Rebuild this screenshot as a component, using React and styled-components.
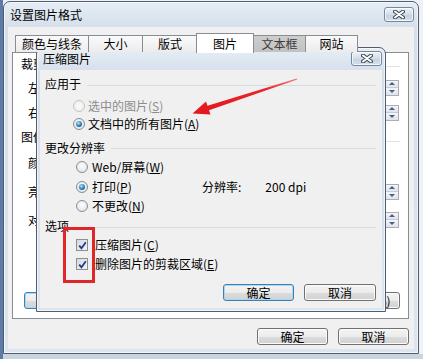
import styled, { createGlobalStyle } from 'styled-components';

const GlobalStyle = createGlobalStyle`
  html, body {
    margin: 0;
    padding: 0;
  }
  body {
    font-family: "Noto Sans CJK SC", "Noto Sans", sans-serif;
    font-size: 12px;
    color: #000;
  }
`;

const Desktop = styled.div`
  position: relative;
  width: 423px;
  height: 359px;
  overflow: hidden;
  background:
    linear-gradient(to right, #5e7aa6 0, #5e7aa6 3px, transparent 3px),
    linear-gradient(to bottom, #eef1f5 0, #eef1f5 354px, #c9d4e1 354px);
`;

const Window = styled.div`
  position: absolute;
  left: ${p => p.$x}px;
  top: ${p => p.$y}px;
  width: ${p => p.$w}px;
  height: ${p => p.$h}px;
  box-sizing: border-box;
  display: flex;
  flex-direction: column;
  border: 1px solid #4f5d6e;
  border-radius: 7px 7px 0 0;
  background: linear-gradient(to bottom, #e6edf5, #d5dfea 26px, #dce4ed);
  box-shadow: inset 0 0 0 1px rgba(255, 255, 255, 0.6);
`;

const TitleBar = styled.div`
  height: ${p => p.$h}px;
  flex: none;
  display: flex;
  align-items: flex-start;
  justify-content: space-between;
  padding: 0 ${p => p.$pr}px 0 6px;
`;

const TitleText = styled.span`
  line-height: 18px;
  align-self: center;
`;

const CloseButton = styled.div`
  width: ${p => p.$w}px;
  height: 15px;
  margin-top: ${p => p.$mt}px;
  box-sizing: border-box;
  border: 1px solid #7688a0;
  border-radius: 3px;
  background: linear-gradient(to bottom, #eef2f7, #d3dde9 50%, #c4d1e0 51%, #d6e0ec);
  box-shadow: inset 0 0 0 1px rgba(255, 255, 255, 0.7);
  display: flex;
  align-items: center;
  justify-content: center;
`;

const Client = styled.div`
  flex: 1;
  margin: 0 ${p => p.$m}px ${p => p.$m}px;
  background: #f0f0f0;
  display: flex;
  flex-direction: column;
  padding: ${p => p.$pad};
  min-height: 0;
`;

const Tabs = styled.div`
  display: flex;
  align-items: flex-end;
  height: 20px;
  margin: 0 0 -1px 3px;
  position: relative;
  z-index: 1;
`;

const Tab = styled.div`
  width: ${p => p.$w}px;
  height: ${p => (p.$active ? 20 : 17)}px;
  margin-bottom: ${p => (p.$active ? 0 : 1)}px;
  margin-left: ${p => (p.$active ? -1 : 0)}px;
  box-sizing: border-box;
  border: 1px solid #898c95;
  border-bottom: none;
  border-left: ${p => (p.$first || p.$active ? '1px solid #898c95' : 'none')};
  border-right: ${p => (p.$beforeActive ? 'none' : '1px solid #898c95')};
  background: ${p =>
    p.$active ? '#fff' : p.$disabled ? 'linear-gradient(#cdcdcd, #c2c2c2)' : 'linear-gradient(#fafafa, #ececec)'};
  color: ${p => (p.$disabled ? '#3c3c3c' : '#000')};
  display: flex;
  align-items: center;
  justify-content: center;
  line-height: 16px;
`;

const Panel = styled.div`
  height: 267px;
  flex: none;
  box-sizing: border-box;
  border: 1px solid #898c95;
  background: #fff;
  display: flex;
  flex-direction: column;
  padding: 0 8px 9px;
`;

const PanelHeading = styled.div`
  height: ${p => p.$h}px;
  display: flex;
  align-items: center;
  line-height: 18px;
`;

const Rule = styled.div`
  flex: 1;
  height: 1px;
  background: ${p => p.$c || '#dde3ea'};
  margin: ${p => p.$off || 3}px 0 0 6px;
`;

const FieldRow = styled.div`
  height: ${p => p.$h}px;
  display: flex;
  align-items: center;
  padding-left: 7px;
  line-height: 18px;
`;

const Field = styled.div`
  margin-left: auto;
  margin-right: 1px;
  width: 70px;
  height: 16px;
  box-sizing: border-box;
  border: 1px solid #abadb3;
  background: #fff;
  display: flex;
  justify-content: flex-end;
`;

const Spinner = styled.div`
  width: 12px;
  display: flex;
  flex-direction: column;
  border-left: 1px solid #c9ccd4;
`;

const SpinHalf = styled.div`
  flex: 1;
  display: flex;
  align-items: center;
  justify-content: center;
  background: linear-gradient(#f4f5f8, #dfe3ea);
  border-bottom: ${p => (p.$up ? '1px solid #c9ccd4' : 'none')};
  &::after {
    content: '';
    border-left: 3px solid transparent;
    border-right: 3px solid transparent;
    ${p => (p.$up ? 'border-bottom: 3px solid #4a5f86;' : 'border-top: 3px solid #4a5f86;')}
  }
`;

const Select = styled.div`
  margin-left: auto;
  margin-right: 40px;
  width: 90px;
  height: 18px;
  border: 1px solid #abadb3;
  box-sizing: border-box;
`;

const PanelButtons = styled.div`
  margin-top: auto;
  display: flex;
  justify-content: space-between;
  padding-left: 3px;
`;

const Btn = styled.button`
  width: ${p => p.$w}px;
  height: 17px;
  box-sizing: border-box;
  padding: 0;
  border: 1px solid ${p => (p.$default ? '#3c7fb1' : '#707070')};
  border-radius: 3px;
  background: linear-gradient(to bottom, #f4f4f4 0, #ececec 50%, #dcdcdc 51%, #d2d2d2 100%);
  box-shadow: inset 0 0 0 1px ${p => (p.$default ? '#a8d8f3' : '#fbfbfb')};
  font-family: inherit;
  font-size: 12px;
  line-height: 15px;
  color: #000;
  text-align: center;
`;

const ButtonRow = styled.div`
  display: flex;
  justify-content: flex-end;
  gap: 10px;
  margin-top: ${p => p.$mt}px;
`;

const Heading = styled.div`
  height: 18px;
  margin-top: ${p => p.$mt}px;
  display: flex;
  align-items: center;
  line-height: 18px;
`;

const Option = styled.div`
  height: 18px;
  margin-top: ${p => p.$mt}px;
  padding-left: ${p => p.$indent}px;
  display: flex;
  align-items: center;
  gap: ${p => p.$gap}px;
  line-height: 18px;
  color: ${p => (p.$disabled ? '#8d8d8d' : '#000')};
`;

const Label = styled.span`
  width: ${p => (p.$w ? `${p.$w}px` : 'auto')};
  flex: none;
`;

const Radio = styled.span`
  width: 12px;
  height: 12px;
  flex: none;
  box-sizing: border-box;
  border-radius: 50%;
  border: 1px solid ${p => (p.$disabled ? '#c4c4c4' : '#8a8d91')};
  background: ${p =>
    p.$disabled
      ? 'radial-gradient(circle at 50% 50%, #fafafa, #ececec)'
      : 'radial-gradient(circle at 50% 40%, #ffffff, #d9dce0)'};
  display: flex;
  align-items: center;
  justify-content: center;
  &::after {
    content: '';
    display: ${p => (p.$checked ? 'block' : 'none')};
    width: 6px;
    height: 6px;
    border-radius: 50%;
    background: radial-gradient(circle at 40% 35%, #b7e6ff, #2a7bb5 55%, #0f3f70);
  }
`;

const Check = styled.span`
  width: 12px;
  height: 12px;
  flex: none;
  box-sizing: border-box;
  border: 1px solid #8e8f8f;
  background: linear-gradient(135deg, #d3d8e0, #f2f4f7);
  display: flex;
  align-items: center;
  justify-content: center;
`;

const ResInfo = styled.span`
  display: flex;
  gap: 24px;
  color: #000;
`;

const RedBox = styled.div`
  position: absolute;
  left: 63px;
  top: 227px;
  width: 32px;
  height: 56px;
  box-sizing: border-box;
  border: 3px solid #e1262b;
  z-index: 5;
`;

const ArrowSvg = styled.svg`
  position: absolute;
  left: 190px;
  top: 75px;
  z-index: 5;
`;

const CloseGlyph = () => (
  <svg width="12" height="9" viewBox="0 0 12 9">
    <path d="M2 1.5 L10 7.5 M10 1.5 L2 7.5" stroke="#3e4856" strokeWidth="4" strokeLinecap="round" />
    <path d="M2 1.5 L10 7.5 M10 1.5 L2 7.5" stroke="#fff" strokeWidth="2" strokeLinecap="round" />
  </svg>
);

const Tick = () => (
  <svg width="9" height="9" viewBox="0 0 9 9">
    <path d="M1.2 4.6 L3.5 7.2 L7.8 1.3" fill="none" stroke="#28388a" strokeWidth="1.8" />
  </svg>
);

const Spin = () => (
  <Field>
    <Spinner>
      <SpinHalf $up />
      <SpinHalf />
    </Spinner>
  </Field>
);

const tabs = [
  { t: '颜色与线条', w: 74 },
  { t: '大小', w: 54 },
  { t: '版式', w: 54, beforeActive: true },
  { t: '图片', w: 58, active: true },
  { t: '文本框', w: 52, disabled: true },
  { t: '网站', w: 52 },
];

export default function App() {
  return (
    <Desktop>
      <GlobalStyle />

      <Window $x={3} $y={1} $w={416} $h={353}>
        <TitleBar $h={25} $pr={4}>
          <TitleText>设置图片格式</TitleText>
          <CloseButton $w={30} $mt={5}>
            <CloseGlyph />
          </CloseButton>
        </TitleBar>
        <Client $m={4} $pad="6px 5px 0 4px">
          <Tabs>
            {tabs.map((tab, i) => (
              <Tab
                key={tab.t}
                $w={tab.w}
                $first={i === 0}
                $active={tab.active}
                $disabled={tab.disabled}
                $beforeActive={tab.beforeActive}
              >
                {tab.t}
              </Tab>
            ))}
          </Tabs>
          <Panel>
            <PanelHeading $h={22}>
              裁剪
              <Rule $off={5} />
            </PanelHeading>
            <FieldRow $h={25}>
              左(<u>L</u>):
              <Spin />
            </FieldRow>
            <FieldRow $h={25}>
              右(<u>R</u>):
              <Spin />
            </FieldRow>
            <PanelHeading $h={24}>
              图像控制
              <Rule $off={8} />
            </PanelHeading>
            <FieldRow $h={28}>
              颜色(<u>C</u>):
              <Select />
            </FieldRow>
            <FieldRow $h={29}>
              亮度(<u>H</u>):
              <Spin />
            </FieldRow>
            <FieldRow $h={27}>
              对比度(<u>N</u>):
              <Spin />
            </FieldRow>
            <PanelButtons>
              <Btn $w={82} $default>
                压缩(<u>M</u>)...
              </Btn>
              <Btn $w={82}>重新设置(<u>S</u>)</Btn>
            </PanelButtons>
          </Panel>
          <ButtonRow $mt={9}>
            <Btn $w={71}>确定</Btn>
            <Btn $w={71}>取消</Btn>
          </ButtonRow>
        </Client>
      </Window>

      <Window $x={36} $y={47} $w={350} $h={265}>
        <TitleBar $h={22} $pr={3}>
          <TitleText>压缩图片</TitleText>
          <CloseButton $w={31} $mt={3}>
            <CloseGlyph />
          </CloseButton>
        </TitleBar>
        <Client $m={3} $pad="0 6px 0 5px">
          <Heading $mt={5}>
            应用于
            <Rule $c="#d3dce6" $off={2} />
          </Heading>
          <Option $mt={4} $indent={28} $gap={3} $disabled>
            <Radio $disabled />
            <Label>
              选中的图片(<u>S</u>)
            </Label>
          </Option>
          <Option $mt={0} $indent={28} $gap={3}>
            <Radio $checked />
            <Label>
              文档中的所有图片(<u>A</u>)
            </Label>
          </Option>
          <Heading $mt={6}>
            更改分辨率
            <Rule $c="#d3dce6" $off={1} />
          </Heading>
          <Option $mt={1} $indent={31} $gap={4}>
            <Radio />
            <Label>
              Web/屏幕(<u>W</u>)
            </Label>
          </Option>
          <Option $mt={2} $indent={31} $gap={4}>
            <Radio $checked />
            <Label $w={106}>
              打印(<u>P</u>)
            </Label>
            <ResInfo>
              <span>分辨率:</span>
              <span>200 dpi</span>
            </ResInfo>
          </Option>
          <Option $mt={1} $indent={31} $gap={4}>
            <Radio />
            <Label>
              不更改(<u>N</u>)
            </Label>
          </Option>
          <Heading $mt={2}>
            选项
            <Rule $c="#d3dce6" $off={2} />
          </Heading>
          <Option $mt={1} $indent={31} $gap={7}>
            <Check>
              <Tick />
            </Check>
            <Label>
              压缩图片(<u>C</u>)
            </Label>
          </Option>
          <Option $mt={1} $indent={31} $gap={7}>
            <Check>
              <Tick />
            </Check>
            <Label>
              删除图片的剪裁区域(<u>E</u>)
            </Label>
          </Option>
          <ButtonRow $mt={11}>
            <Btn $w={71} $default>
              确定
            </Btn>
            <Btn $w={72}>取消</Btn>
          </ButtonRow>
        </Client>
      </Window>

      <RedBox />
      <ArrowSvg width="112" height="44" viewBox="0 0 112 44">
        <defs>
          <linearGradient id="arrowFade" x1="0" y1="1" x2="1" y2="0">
            <stop offset="0" stopColor="#e3161c" />
            <stop offset="0.7" stopColor="#e8262b" />
            <stop offset="1" stopColor="#f07a80" />
          </linearGradient>
        </defs>
        <polygon
          points="2.5,38.5 20.5,39.5 19,35.2 107.3,4.6 106.7,3.4 17.5,30.8 16,26.5"
          fill="url(#arrowFade)"
        />
      </ArrowSvg>
    </Desktop>
  );
}
